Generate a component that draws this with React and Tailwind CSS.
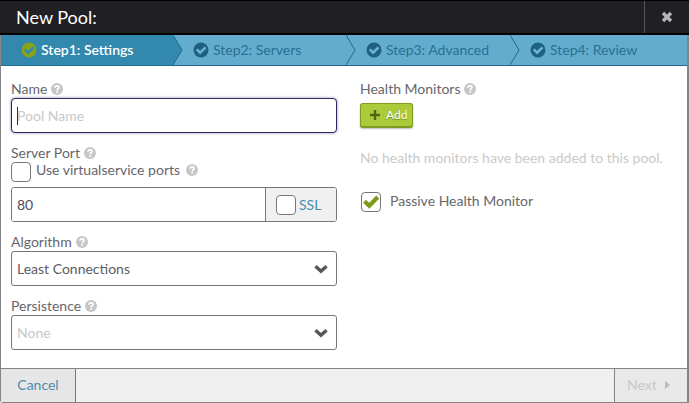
import React from "react";

const steps = [
  { title: "Step1: Settings", active: true },
  { title: "Step2: Servers" },
  { title: "Step3: Advanced" },
  { title: "Step4: Review" },
];

function Help() {
  return (
    <svg viewBox="0 0 12 12" className="size-3 shrink-0" aria-hidden="true">
      <circle cx="6" cy="6" r="6" fill="#c6c6c6" />
      <path d="M4 4.700C4.100 3.400 5 2.900 6 2.900c1.200 0 2 .7 2 1.600C8 5.900 6.200 5.700 6.200 7.300" fill="none" stroke="#fff" strokeWidth="1.700" />
      <rect x="5.300" y="8" width="1.800" height="1.700" fill="#fff" />
    </svg>
  );
}

function StepMark({ active }) {
  return (
    <svg viewBox="0 0 16 16" className="size-4 shrink-0" aria-hidden="true">
      <circle cx="8" cy="8" r="7.500" fill={active ? "#8aa11c" : "#1d6080"} />
      <path d="M3.800 7.400L7.100 10.700L12.500 5.300" fill="none" stroke={active ? "#3289ad" : "#6bb4d4"} strokeWidth="2.600" />
    </svg>
  );
}

function Label({ htmlFor, children }) {
  return (
    <div className="flex h-[18px] items-center gap-1">
      <label htmlFor={htmlFor}>{children}</label>
      <Help />
    </div>
  );
}

function Check({ id, checked = false }) {
  return (
    <span className="grid size-5 shrink-0">
      <input
        id={id}
        type="checkbox"
        defaultChecked={checked}
        className="peer col-start-1 row-start-1 size-5 appearance-none rounded-[4px] border border-[#77777a] bg-white"
      />
      <svg viewBox="0 0 20 20" className="pointer-events-none invisible col-start-1 row-start-1 size-5 peer-checked:visible" aria-hidden="true">
        <path d="M3.500 9.200L8.300 13.700L16.800 5" fill="none" stroke="#7d9a1c" strokeWidth="4.200" />
      </svg>
    </span>
  );
}

function Select({ id, value, muted }) {
  return (
    <div className="grid items-center">
      <select
        id={id}
        defaultValue={value}
        className={
          "col-start-1 row-start-1 h-[35px] w-full appearance-none rounded-[3px] border border-[#77777a] bg-white px-[5px] outline-none " +
          (muted ? "text-[#c8c8c8]" : "text-[#5c5c60]")
        }
      >
        <option>{value}</option>
      </select>
      <svg viewBox="0 0 14 10" className="pointer-events-none col-start-1 row-start-1 mr-[9px] h-[10px] w-[14px] justify-self-end" aria-hidden="true">
        <path d="M1.500 2.200L7 7.200L12.500 2.200" fill="none" stroke="#55555a" strokeWidth="3.400" />
      </svg>
    </div>
  );
}

export default function App() {
  return (
    <div className="font-['Lato',sans-serif] text-[14px] leading-[18px] text-[#66666a]">
      <header className="flex h-[35px] border-t border-b-2 border-black bg-[#1f1f24]">
        <h1 className="flex-1 self-center pl-4 text-[18px] leading-6 text-white">New Pool:</h1>
        <button type="button" aria-label="Close" className="flex w-[45px] items-center justify-center border-l border-[#55555a]">
          <svg viewBox="0 0 12 12" className="size-3" aria-hidden="true">
            <path d="M2 2L10 10M10 2L2 10" stroke="#b5b5b8" strokeWidth="3.400" />
          </svg>
        </button>
      </header>

      <div className="rounded-bl-[3px] border-r-2 border-b border-l border-[#858588] bg-white">
        <ol className="grid h-[31px] grid-cols-[172fr_173fr_164fr_177fr] border-b border-[#226a89] bg-[#62adce]">
          {steps.map((step, i) => (
            <li
              key={step.title}
              className={
                "relative flex items-center gap-1 pl-5 " +
                (step.active ? "bg-[#3289ad] text-white" : "text-[#2a7090]")
              }
            >
              {i > 0 && (
                <svg viewBox="0 0 10 30" className="absolute top-0 left-0 h-[30px] w-[10px]" aria-hidden="true">
                  <path d="M0 0L9 15L0 30" fill={i === 1 ? "#3289ad" : "none"} stroke="#22698a" strokeWidth="1" />
                </svg>
              )}
              <StepMark active={step.active} />
              <span className={step.active ? "font-semibold" : ""}>{step.title}</span>
            </li>
          ))}
        </ol>

        <form id="pool" className="grid grid-cols-[326fr_317fr] gap-[23px] px-[10px] pt-[14px] pb-[18px]">
          <div className="flex flex-col gap-[11px]">
            <div>
              <Label htmlFor="name">Name</Label>
              <div className="grid items-center">
                <input
                  id="name"
                  type="text"
                  placeholder="Pool Name"
                  className="col-start-1 row-start-1 h-[35px] w-full rounded-[4px] border border-[#2f2a5c] bg-white px-[5px] shadow-[0_0_3px_#8a86b8] outline-none placeholder:text-[#c8c8c8]"
                />
                <span className="pointer-events-none col-start-1 row-start-1 ml-[6px] h-[18px] w-px bg-[#333]" />
              </div>
            </div>

            <div>
              <Label htmlFor="port">Server Port</Label>
              <div className="flex">
                <Check id="virtual" />
                <div className="flex h-4 items-center gap-[6px] pl-[5px]">
                  <label htmlFor="virtual">Use virtualservice ports</label>
                  <Help />
                </div>
              </div>
              <div className="mt-[5px] flex h-[35px] overflow-hidden rounded-[3px] border border-[#77777a]">
                <input id="port" type="text" defaultValue="80" className="min-w-0 flex-1 bg-white px-[5px] text-[#4c4c50] outline-none" />
                <div className="flex w-[71px] items-center gap-[3px] border-l border-[#77777a] bg-[#f0f0f0] pl-[10px]">
                  <Check id="ssl" />
                  <label htmlFor="ssl" className="text-[#4a8bad]">SSL</label>
                </div>
              </div>
            </div>

            <div>
              <Label htmlFor="algorithm">Algorithm</Label>
              <Select id="algorithm" value="Least Connections" />
            </div>

            <div>
              <Label htmlFor="persistence">Persistence</Label>
              <Select id="persistence" value="None" muted />
            </div>
          </div>

          <div>
            <div className="flex h-[18px] items-center gap-1">
              <h2>Health Monitors</h2>
              <Help />
            </div>
            <button
              type="button"
              className="mt-[5px] flex h-[25px] w-[53px] items-center gap-[6px] rounded-[3px] border border-b-2 border-[#7f9c22] bg-[#abcb3a] pl-[9px] text-[12px] text-white shadow-[0_1px_2px_#bbb] [text-shadow:0_1px_1px_#6d861b]"
            >
              <svg viewBox="0 0 10 10" className="size-[10px]" aria-hidden="true">
                <path d="M5 0V10M0 5H10" stroke="#536613" strokeWidth="2.400" />
              </svg>
              Add
            </button>
            <p className="mt-[21px] text-[#cacaca]">No health monitors have been added to this pool.</p>
            <div className="mt-[25px] flex gap-[9px] pl-px">
              <Check id="passive" checked />
              <label htmlFor="passive">Passive Health Monitor</label>
            </div>
          </div>
        </form>

        <footer className="flex h-[34px] justify-between border-t border-[#858588] bg-[#f0f0f0]">
          <button type="button" className="w-[75px] border-r border-[#77777a] bg-[#e6e6e6] pb-px text-[#4a8bad]">
            Cancel
          </button>
          <button type="submit" form="pool" disabled className="flex w-[73px] items-center gap-2 border-l border-[#858588] bg-[#e9e9e9] pb-px pl-3 text-[#c8c8c8]">
            Next
            <svg viewBox="0 0 5 8" className="h-2 w-[5px]" aria-hidden="true">
              <path d="M0 0L5 4L0 8Z" fill="#bcbcbc" />
            </svg>
          </button>
        </footer>
      </div>
    </div>
  );
}
